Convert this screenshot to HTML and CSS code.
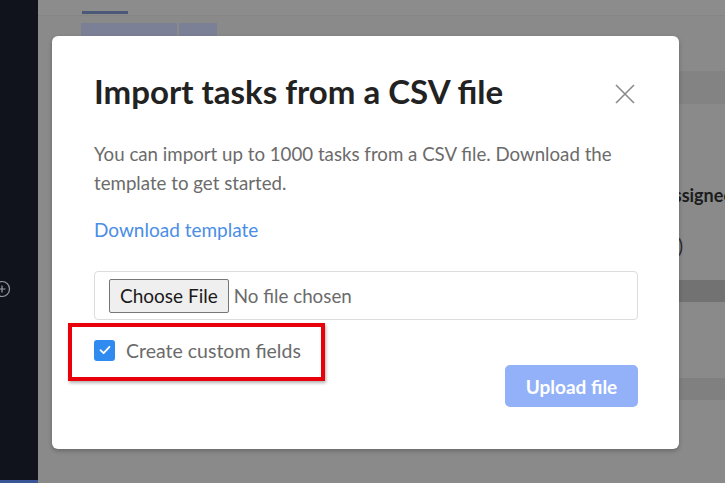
FILE: index.html
```html
<!DOCTYPE html>
<html lang="en">
<head>
<meta charset="utf-8">
<title>Import tasks</title>
<link rel="stylesheet" href="styles.css">
</head>
<body>
<div class="app">
  <aside class="sidebar">
    <div class="side-spacer"></div>
    <svg class="side-add" width="20" height="20" viewBox="0 0 20 20"><circle cx="10" cy="10" r="7.5" fill="none" stroke="#9a9da4" stroke-width="1.2"/><path d="M10 6.5v7M6.5 10h7" stroke="#9a9da4" stroke-width="1.2"/></svg>
    <div class="side-fill"></div>
    <div class="side-bottom"></div>
  </aside>
  <main class="main">
    <header class="topbar">
      <div class="tab-line"></div>
    </header>
    <div class="tabs">
      <div class="tab-box wide"></div>
      <div class="tab-box narrow"></div>
    </div>
    <div class="band band-a"></div>
    <div class="row-head"><span class="col-title">Assignee</span></div>
    <div class="row-cell"><span class="cell-text">(0)</span></div>
    <div class="band band-b"></div>
    <div class="row-empty"></div>
    <div class="band band-c"></div>
  </main>
</div>

<div class="modal">
  <div class="modal-head">
    <h1 class="modal-title">Import tasks from a CSV file</h1>
    <button class="close" aria-label="Close">
      <svg width="20" height="20" viewBox="0 0 20 20"><path d="M1 1L19 19M19 1L1 19" stroke="#8a8a8a" stroke-width="1.6" fill="none"/></svg>
    </button>
  </div>
  <p class="modal-text">You can import up to 1000 tasks from a CSV file. Download the template to get started.</p>
  <a class="link" href="#">Download template</a>
  <div class="file-box">
    <span class="file-btn">Choose File</span>
    <span class="file-none">No file chosen</span>
  </div>
  <div class="modal-foot">
    <label class="check">
      <span class="check-box">
        <svg width="14" height="14" viewBox="0 0 14 14"><path d="M2.5 7.2L5.6 10.2L11.5 3.8" stroke="#fff" stroke-width="1.8" fill="none" stroke-linecap="round" stroke-linejoin="round"/></svg>
      </span>
      <span class="check-label">Create custom fields</span>
    </label>
    <button class="upload">Upload file</button>
    <div class="highlight"></div>
  </div>
</div>
</body>
</html>
```

FILE: styles.css
```css
* { box-sizing: border-box; }
html, body { margin: 0; padding: 0; }
body {
  width: 725px;
  height: 483px;
  overflow: hidden;
  background: #8a8a8a;
  font-family: "Lato", "Liberation Sans", sans-serif;
  position: relative;
}
.app { display: flex; height: 483px; }
.sidebar {
  width: 38px;
  background: #10131b;
  display: flex;
  flex-direction: column;
  align-items: flex-start;
}
.side-spacer { height: 279px; }
.side-add { margin-left: -8px; }
.side-fill { flex: 1; }
.side-bottom { height: 3px; width: 100%; background: #3a5595; }

.main { flex: 1; display: flex; flex-direction: column; background: #8a8a8a; overflow: hidden; }
.topbar { height: 16px; border-bottom: 1px solid #858585; background: #8c8c8c; padding-left: 44px; }
.tab-line { width: 46px; height: 3px; background: #4c5878; margin-top: 11px; }
.tabs { display: flex; gap: 2px; padding: 7px 0 0 43px; height: 38px; }
.tab-box { height: 14px; background: #7b8096; }
.tab-box.wide { width: 96px; }
.tab-box.narrow { width: 38px; }
.band { background: #838383; margin-left: 50px; }
.band-a { height: 33px; margin-top: 17px; }
.row-head { height: 114px; display: flex; justify-content: flex-end; align-items: center; padding-top: 68px; }
.col-title { font-weight: 700; font-size: 18px; color: #1c1c1c; margin-right: -8px; white-space: nowrap; }
.row-cell { height: 62px; display: flex; justify-content: flex-end; align-items: center; padding-bottom: 8px; }
.cell-text { font-size: 19px; color: #2a2a2a; margin-right: 42px; }
.band-b { height: 22px; background: #727272; }
.row-empty { height: 76px; }
.band-c { height: 22px; background: #808080; }

.modal {
  position: absolute;
  left: 52px;
  top: 36px;
  width: 627px;
  height: 413px;
  background: #fff;
  border-radius: 6px;
  box-shadow: 0 2px 4px rgba(0,0,0,0.25);
  padding: 34px 41px 0 42px;
  display: flex;
  flex-direction: column;
}
.modal-head { display: flex; justify-content: space-between; align-items: center; }
.modal-title { margin: 0; font-size: 33px; font-weight: 700; color: #222; line-height: 42px; }
.close { border: 0; background: none; padding: 0; width: 20px; height: 20px; margin-right: 3px; margin-top: 6px; }
.close svg { display: block; }
.modal-text { margin: 28px 0 0; font-size: 18.7px; line-height: 29px; color: #6b6b6b; }
.link { margin-top: 20px; font-size: 19px; line-height: 24px; color: #4a8ee6; text-decoration: none; align-self: flex-start; }
.file-box {
  margin-top: 29px;
  height: 49px;
  border: 1px solid #dcdcdc;
  border-radius: 4px;
  display: flex;
  align-items: center;
  padding-left: 14px;
  gap: 5px;
}
.file-btn {
  background: #efefef;
  border: 1px solid #767676;
  border-radius: 2px;
  font-size: 19px;
  color: #1a1a1a;
  padding: 0 10px;
  height: 34px;
  line-height: 32px;
}
.file-none { font-size: 18.8px; color: #6b6b6b; }
.modal-foot { position: relative; display: flex; justify-content: space-between; align-items: flex-start; margin-top: 19px; }
.check { display: flex; align-items: center; gap: 11px; height: 22px; }
.check-box { width: 21px; height: 21px; border-radius: 3px; background: #2f8bef; display: flex; align-items: center; justify-content: center; }
.check-label { font-size: 19.5px; color: #6b6b6b; }
.upload {
  margin-top: 26px;
  width: 133px;
  height: 42px;
  border: 0;
  border-radius: 5px;
  background: #93b1f9;
  color: #fff;
  font-family: "Lato", sans-serif;
  font-weight: 700;
  font-size: 19px;
}
.highlight {
  position: absolute;
  left: -26px;
  top: -16px;
  width: 257px;
  height: 58px;
  border: 4px solid #e8000b;
  box-shadow: 1px 2px 3px rgba(0,0,0,0.3);
}
```
